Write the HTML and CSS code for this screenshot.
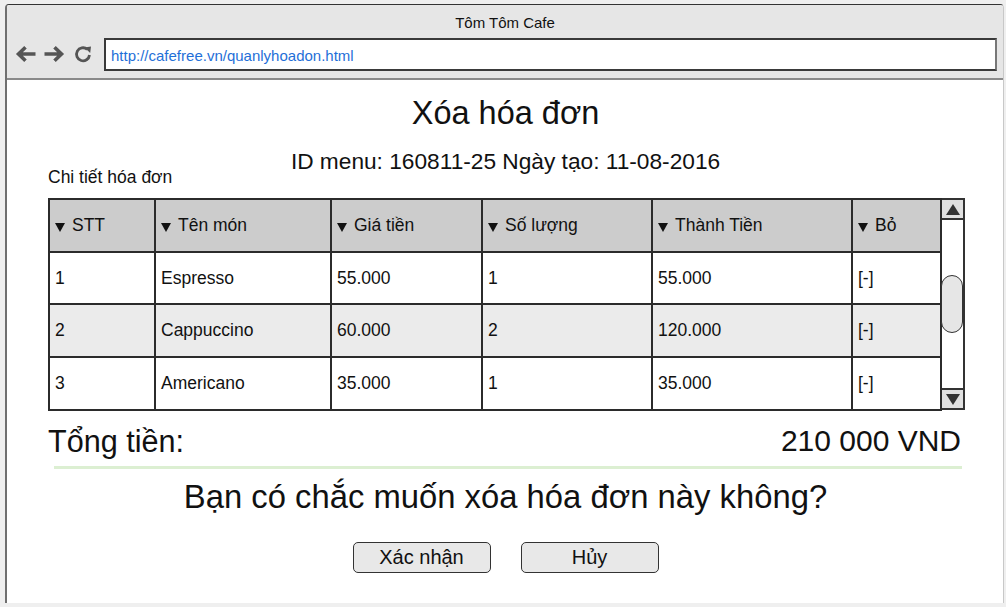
FILE: index.html
```html
<!DOCTYPE html>
<html lang="vi">
<head>
<meta charset="utf-8">
<title>Tôm Tôm Cafe</title>
<link rel="stylesheet" href="styles.css">
</head>
<body>
<div class="window">
  <div class="topbar">
    <div class="win-title">Tôm Tôm Cafe</div>
    <div class="toolbar">
      <svg class="nav-icon" width="21" height="18" viewBox="0 0 21 18"><path d="M20.5 9H4M10.5 2.2L3.5 9L10.5 15.8" fill="none" stroke="#555" stroke-width="3.6"/></svg>
      <svg class="nav-icon" width="21" height="18" viewBox="0 0 21 18"><path d="M0.5 9H17M10.5 2.2L17.5 9L10.5 15.8" fill="none" stroke="#555" stroke-width="3.6"/></svg>
      <svg class="nav-icon reload" width="18" height="18" viewBox="0 0 18 18"><path d="M13.2 4.3A6.5 6.5 0 1 0 15.5 10" fill="none" stroke="#555" stroke-width="2.8"/><polygon points="10.5,2.5 17,1.5 16.2,8" fill="#555"/></svg>
      <div class="address">http://cafefree.vn/quanlyhoadon.html</div>
    </div>
  </div>
  <div class="content">
    <h1 class="title">Xóa hóa đơn</h1>
    <div class="meta">ID menu: 160811-25 Ngày tạo: 11-08-2016</div>
    <div class="section-label">Chi tiết hóa đơn</div>
    <div class="grid-wrap">
      <table class="bill">
        <colgroup>
          <col class="c1"><col class="c2"><col class="c3"><col class="c4"><col class="c5"><col class="c6">
        </colgroup>
        <thead>
          <tr>
            <th><span class="sort"></span>STT</th>
            <th><span class="sort"></span>Tên món</th>
            <th><span class="sort"></span>Giá tiền</th>
            <th><span class="sort"></span>Số lượng</th>
            <th><span class="sort"></span>Thành Tiền</th>
            <th><span class="sort"></span>Bỏ</th>
          </tr>
        </thead>
        <tbody>
          <tr><td>1</td><td>Espresso</td><td>55.000</td><td>1</td><td>55.000</td><td>[-]</td></tr>
          <tr class="alt"><td>2</td><td>Cappuccino</td><td>60.000</td><td>2</td><td>120.000</td><td>[-]</td></tr>
          <tr><td>3</td><td>Americano</td><td>35.000</td><td>1</td><td>35.000</td><td>[-]</td></tr>
        </tbody>
      </table>
      <div class="scrollbar">
        <div class="sb-btn up"><span class="tri-up"></span></div>
        <div class="sb-track"><div class="sb-thumb"></div></div>
        <div class="sb-btn down"><span class="tri-down"></span></div>
      </div>
    </div>
    <div class="total-row">
      <span>Tổng tiền:</span>
      <span class="amount">210 000 VND</span>
    </div>
    <div class="divider"></div>
    <div class="question">Bạn có chắc muốn xóa hóa đơn này không?</div>
    <div class="actions">
      <button class="btn">Xác nhận</button>
      <button class="btn">Hủy</button>
    </div>
  </div>
</div>
</body>
</html>
```
FILE: styles.css
```css
* { box-sizing: border-box; }
body {
  margin: 0;
  background: #efefef;
  font-family: "Liberation Sans", Arial, sans-serif;
  color: #111;
}
.window {
  margin: 4px 0 0 5px;
  width: 999px;
  height: 599px;
  background: #fff;
  border-left: 2px solid #6f6f6f;
  border-top: 1.5px solid #333;
  border-right: 1px solid #c8c8c8;
  border-radius: 4px 4px 0 0;
  display: flex;
  flex-direction: column;
  overflow: hidden;
}
.topbar {
  flex: none;
  height: 75px;
  background: #e6e6e6;
  border-bottom: 2px solid #8a8a8a;
}
.win-title {
  text-align: center;
  font-size: 15px;
  line-height: 18px;
  padding-top: 9px;
  color: #111;
}
.toolbar {
  display: flex;
  align-items: center;
  margin-top: 5.5px;
  padding-left: 8px;
  padding-right: 6px;
  height: 33px;
}
.nav-icon { flex: none; margin-right: 8px; }
.reload { margin-right: 12px; margin-left: 1px; }
.address {
  flex: 1;
  height: 33px;
  border: 2px solid #3a3a3a;
  border-right-color: #777;
  background: #fff;
  color: #1f6fd8;
  font-size: 15px;
  line-height: 29px;
  padding: 1px 0 0 5px;
}
.content {
  flex: 1;
  display: flex;
  flex-direction: column;
  align-items: center;
  padding: 0 40px 0 41px;
}
.title {
  margin: 14px 0 0;
  font-weight: normal;
  font-size: 32.5px;
  line-height: 38px;
}
.meta {
  margin-top: 21px;
  font-size: 22.7px;
  line-height: 16px;
}
.section-label {
  align-self: flex-start;
  margin-top: -2px;
  font-size: 17.5px;
  line-height: 20px;
}
.grid-wrap {
  align-self: stretch;
  display: flex;
  margin-top: 11px;
  height: 212px;
}
.bill {
  width: 892px;
  height: 212px;
  table-layout: fixed;
  border-collapse: collapse;
  font-size: 17.5px;
}
.c1 { width: 106px; }
.c2 { width: 176px; }
.c3 { width: 151px; }
.c4 { width: 170px; }
.c5 { width: 200px; }
.c6 { width: 89px; }
.bill th, .bill td {
  border: 2px solid #2b2b2b;
  height: 52.7px;
  padding: 0 0 0 5px;
  text-align: left;
  font-weight: normal;
  white-space: nowrap;
}
.bill th { background: #cccccc; }
.bill tr.alt td { background: #ebebeb; }
.sort {
  display: inline-block;
  width: 0;
  height: 0;
  border-left: 5px solid transparent;
  border-right: 5px solid transparent;
  border-top: 9px solid #111;
  margin-right: 7px;
  vertical-align: -1px;
}
.scrollbar {
  flex: none;
  width: 23px;
  display: flex;
  flex-direction: column;
  border: 2px solid #333;
  border-left: none;
  background: #fff;
}
.sb-btn {
  flex: none;
  background: #e0e0e0;
  display: flex;
  align-items: center;
  justify-content: center;
}
.sb-btn.up { border-bottom: 2px solid #333; height: 20px; }
.sb-btn.down { border-top: 2px solid #333; height: 20px; }
.tri-up, .tri-down {
  width: 0; height: 0;
  border-left: 7px solid transparent;
  border-right: 7px solid transparent;
}
.tri-up { border-bottom: 11px solid #333; }
.tri-down { border-top: 11px solid #333; }
.sb-track { flex: 1; }
.sb-thumb {
  margin-top: 55px;
  margin-left: -1px;
  height: 58px;
  border: 1.5px solid #333;
  border-radius: 11px;
  background: #e6e6e6;
}
.total-row {
  align-self: stretch;
  display: flex;
  justify-content: space-between;
  margin-top: 14px;
  font-size: 30.6px;
  line-height: 34px;
  padding-right: 2px;
}
.amount { font-size: 30px; }
.divider {
  align-self: stretch;
  margin: 8px 1px 0 6px;
  height: 3px;
  background: #dcefd2;
}
.question {
  margin-top: 9px;
  font-size: 32.8px;
  line-height: 38px;
}
.actions {
  display: flex;
  gap: 30px;
  margin-top: 26px;
}
.btn {
  width: 138px;
  height: 31px;
  border: 1.5px solid #333;
  border-radius: 5px;
  background: #e8e8e8;
  font-family: "Liberation Sans", Arial, sans-serif;
  font-size: 20px;
  line-height: 26px;
  color: #111;
  padding: 0 0 2px;
}
```
